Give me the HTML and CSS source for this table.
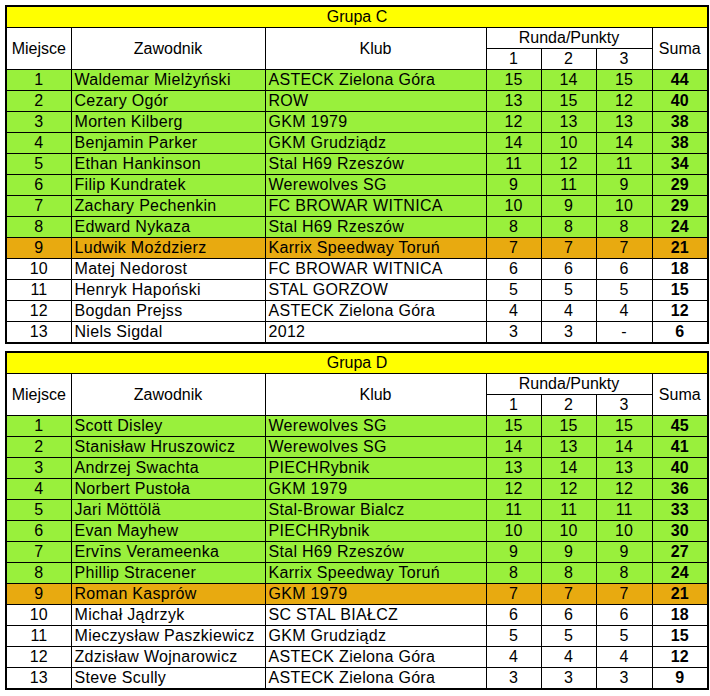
FILE: index.html
```html
<!DOCTYPE html>
<html lang="pl">
<head>
<meta charset="utf-8">
<title>Grupy</title>
<link rel="stylesheet" href="styles.css">
</head>
<body>
<div class="page">
<table class="grp">
<colgroup><col class="c-m"><col class="c-n"><col class="c-k"><col class="c-r"><col class="c-r"><col class="c-r3"><col class="c-s"></colgroup>
<tr class="title"><td colspan="7">Grupa C</td></tr>
<tr class="head"><td rowspan="2">Miejsce</td><td rowspan="2">Zawodnik</td><td rowspan="2">Klub</td><td colspan="3">Runda/Punkty</td><td rowspan="2">Suma</td></tr>
<tr class="head"><td>1</td><td>2</td><td>3</td></tr>
<tr class="g"><td>1</td><td class="l">Waldemar Mielżyński</td><td class="l">ASTECK Zielona Góra</td><td>15</td><td>14</td><td>15</td><td class="b">44</td></tr>
<tr class="g"><td>2</td><td class="l">Cezary Ogór</td><td class="l">ROW</td><td>13</td><td>15</td><td>12</td><td class="b">40</td></tr>
<tr class="g"><td>3</td><td class="l">Morten Kilberg</td><td class="l">GKM 1979</td><td>12</td><td>13</td><td>13</td><td class="b">38</td></tr>
<tr class="g"><td>4</td><td class="l">Benjamin Parker</td><td class="l">GKM Grudziądz</td><td>14</td><td>10</td><td>14</td><td class="b">38</td></tr>
<tr class="g"><td>5</td><td class="l">Ethan Hankinson</td><td class="l">Stal H69 Rzeszów</td><td>11</td><td>12</td><td>11</td><td class="b">34</td></tr>
<tr class="g"><td>6</td><td class="l">Filip Kundratek</td><td class="l">Werewolves SG</td><td>9</td><td>11</td><td>9</td><td class="b">29</td></tr>
<tr class="g"><td>7</td><td class="l">Zachary Pechenkin</td><td class="l">FC BROWAR WITNICA</td><td>10</td><td>9</td><td>10</td><td class="b">29</td></tr>
<tr class="g"><td>8</td><td class="l">Edward Nykaza</td><td class="l">Stal H69 Rzeszów</td><td>8</td><td>8</td><td>8</td><td class="b">24</td></tr>
<tr class="o"><td>9</td><td class="l">Ludwik Moździerz</td><td class="l">Karrix Speedway Toruń</td><td>7</td><td>7</td><td>7</td><td class="b">21</td></tr>
<tr><td>10</td><td class="l">Matej Nedorost</td><td class="l">FC BROWAR WITNICA</td><td>6</td><td>6</td><td>6</td><td class="b">18</td></tr>
<tr><td>11</td><td class="l">Henryk Hapoński</td><td class="l">STAL GORZOW</td><td>5</td><td>5</td><td>5</td><td class="b">15</td></tr>
<tr><td>12</td><td class="l">Bogdan Prejss</td><td class="l">ASTECK Zielona Góra</td><td>4</td><td>4</td><td>4</td><td class="b">12</td></tr>
<tr><td>13</td><td class="l">Niels Sigdal</td><td class="l">2012</td><td>3</td><td>3</td><td>-</td><td class="b">6</td></tr>
</table>

<table class="grp">
<colgroup><col class="c-m"><col class="c-n"><col class="c-k"><col class="c-r"><col class="c-r"><col class="c-r3"><col class="c-s"></colgroup>
<tr class="title"><td colspan="7">Grupa D</td></tr>
<tr class="head"><td rowspan="2">Miejsce</td><td rowspan="2">Zawodnik</td><td rowspan="2">Klub</td><td colspan="3">Runda/Punkty</td><td rowspan="2">Suma</td></tr>
<tr class="head"><td>1</td><td>2</td><td>3</td></tr>
<tr class="g"><td>1</td><td class="l">Scott Disley</td><td class="l">Werewolves SG</td><td>15</td><td>15</td><td>15</td><td class="b">45</td></tr>
<tr class="g"><td>2</td><td class="l">Stanisław Hruszowicz</td><td class="l">Werewolves SG</td><td>14</td><td>13</td><td>14</td><td class="b">41</td></tr>
<tr class="g"><td>3</td><td class="l">Andrzej Swachta</td><td class="l">PIECHRybnik</td><td>13</td><td>14</td><td>13</td><td class="b">40</td></tr>
<tr class="g"><td>4</td><td class="l">Norbert Pustoła</td><td class="l">GKM 1979</td><td>12</td><td>12</td><td>12</td><td class="b">36</td></tr>
<tr class="g"><td>5</td><td class="l">Jari Möttölä</td><td class="l">Stal-Browar Bialcz</td><td>11</td><td>11</td><td>11</td><td class="b">33</td></tr>
<tr class="g"><td>6</td><td class="l">Evan Mayhew</td><td class="l">PIECHRybnik</td><td>10</td><td>10</td><td>10</td><td class="b">30</td></tr>
<tr class="g"><td>7</td><td class="l">Ervīns Verameenka</td><td class="l">Stal H69 Rzeszów</td><td>9</td><td>9</td><td>9</td><td class="b">27</td></tr>
<tr class="g"><td>8</td><td class="l">Phillip Stracener</td><td class="l">Karrix Speedway Toruń</td><td>8</td><td>8</td><td>8</td><td class="b">24</td></tr>
<tr class="o"><td>9</td><td class="l">Roman Kasprów</td><td class="l">GKM 1979</td><td>7</td><td>7</td><td>7</td><td class="b">21</td></tr>
<tr><td>10</td><td class="l">Michał Jądrzyk</td><td class="l">SC STAL BIAŁCZ</td><td>6</td><td>6</td><td>6</td><td class="b">18</td></tr>
<tr><td>11</td><td class="l">Mieczysław Paszkiewicz</td><td class="l">GKM Grudziądz</td><td>5</td><td>5</td><td>5</td><td class="b">15</td></tr>
<tr><td>12</td><td class="l">Zdzisław Wojnarowicz</td><td class="l">ASTECK Zielona Góra</td><td>4</td><td>4</td><td>4</td><td class="b">12</td></tr>
<tr><td>13</td><td class="l">Steve Scully</td><td class="l">ASTECK Zielona Góra</td><td>3</td><td>3</td><td>3</td><td class="b">9</td></tr>
</table>
</div>
</body>
</html>
```

FILE: styles.css
```css
html, body {
  margin: 0;
  padding: 0;
  background: #fff;
}
.page {
  padding: 5px 0 0 5px;
  display: flex;
  flex-direction: column;
  gap: 7px;
  font-family: "Liberation Sans", Arial, sans-serif;
  font-size: 16px;
  color: #000;
}
.grp {
  border-collapse: collapse;
  table-layout: fixed;
  width: 702px;
  border: 2px solid #000;
}
.c-m { width: 65px; }
.c-n { width: 194px; }
.c-k { width: 221px; }
.c-r { width: 55px; }
.c-r3 { width: 56px; }
.c-s { width: 56px; }
.grp td {
  border: 1px solid #000;
  height: 20px;
  padding: 0 3px;
  line-height: 18px;
  text-align: center;
  vertical-align: middle;
  white-space: nowrap;
  overflow: hidden;
}
.grp td.l {
  text-align: left;
  letter-spacing: 0.3px;
}
.grp td.b { font-weight: bold; }
.title td {
  background: #ffff00;
  border-bottom: 1px solid #000;
}
.g td { background: #99f03c; }
.o td { background: #e8aa10; }
```
